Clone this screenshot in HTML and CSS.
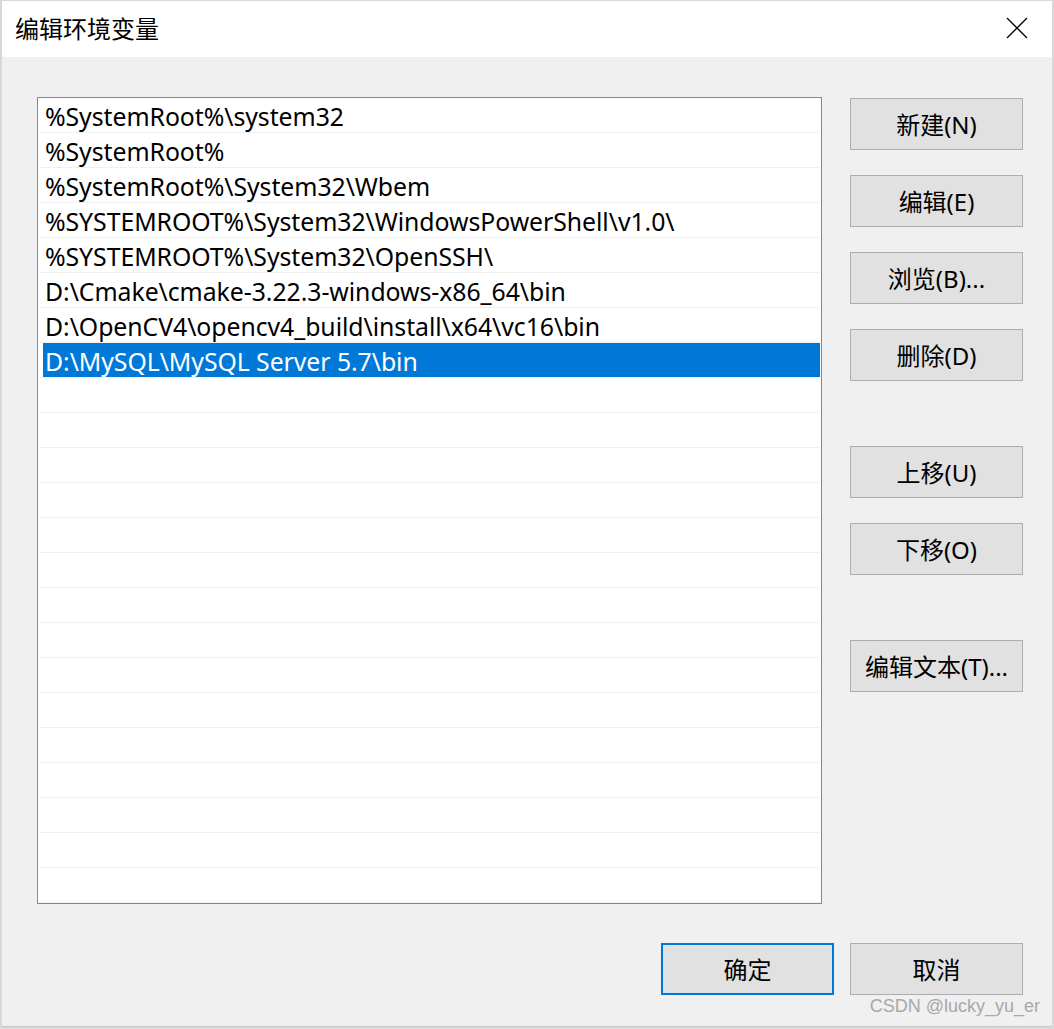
FILE: index.html
```html
<!DOCTYPE html>
<html lang="zh-CN">
<head>
<meta charset="utf-8">
<title>编辑环境变量</title>
<link rel="stylesheet" href="styles.css">
</head>
<body>
<div class="dialog">
  <div class="titlebar">
    <span class="title">编辑环境变量</span>
    <svg class="close" width="22" height="22" viewBox="0 0 22 22"><path d="M1 1 L21 21 M21 1 L1 21" stroke="#000" stroke-width="1.3" fill="none"/></svg>
  </div>
  <div class="body">
    <div class="main">
      <div class="listbox">
        <div class="row"><span class="label">%SystemRoot%\system32</span></div>
        <div class="row"><span class="label">%SystemRoot%</span></div>
        <div class="row"><span class="label">%SystemRoot%\System32\Wbem</span></div>
        <div class="row"><span class="label">%SYSTEMROOT%\System32\WindowsPowerShell\v1.0\</span></div>
        <div class="row"><span class="label">%SYSTEMROOT%\System32\OpenSSH\</span></div>
        <div class="row"><span class="label">D:\Cmake\cmake-3.22.3-windows-x86_64\bin</span></div>
        <div class="row"><span class="label">D:\OpenCV4\opencv4_build\install\x64\vc16\bin</span></div>
        <div class="row selected"><span class="label">D:\MySQL\MySQL Server 5.7\bin</span></div>
        <div class="row"></div><div class="row"></div><div class="row"></div><div class="row"></div>
        <div class="row"></div><div class="row"></div><div class="row"></div><div class="row"></div>
        <div class="row"></div><div class="row"></div><div class="row"></div><div class="row"></div>
        <div class="row"></div><div class="row"></div><div class="row"></div>
      </div>
      <div class="side">
        <div class="group">
          <button class="btn">新建(N)</button>
          <button class="btn">编辑(E)</button>
          <button class="btn">浏览(B)...</button>
          <button class="btn">删除(D)</button>
        </div>
        <div class="group">
          <button class="btn">上移(U)</button>
          <button class="btn">下移(O)</button>
        </div>
        <div class="group">
          <button class="btn">编辑文本(T)...</button>
        </div>
      </div>
    </div>
    <div class="footer">
      <button class="btn primary">确定</button>
      <button class="btn">取消</button>
    </div>
  </div>
  <div class="watermark">CSDN @lucky_yu_er</div>
</div>
</body>
</html>
```

FILE: styles.css
```css
html, body {
  margin: 0;
  padding: 0;
}
body {
  background: #d8d8d8;
  width: 1054px;
  height: 1029px;
  overflow: hidden;
  font-family: "Noto Sans", "Noto Sans CJK SC", sans-serif;
}
.dialog {
  position: relative;
  margin: 1px 0 0 2px;
  width: 1050px;
  height: 1026px;
  background: #f0f0f0;
  box-sizing: border-box;
  border-bottom: 1px solid #c8c8c8;
  display: flex;
  flex-direction: column;
}
.titlebar {
  height: 56px;
  background: #ffffff;
  display: flex;
  align-items: center;
  justify-content: space-between;
  padding: 0 24px 0 13px;
  flex: none;
}
.title {
  font-family: "Noto Sans CJK SC", sans-serif;
  font-size: 24px;
  color: #000;
  margin-top: -3px;
}
.close {
  margin-top: -2px;
}
.body {
  padding: 40px 0 0 35px;
  display: flex;
  flex-direction: column;
}
.main {
  display: flex;
  align-items: flex-start;
}
.listbox {
  width: 785px;
  height: 807px;
  box-sizing: border-box;
  border: 1px solid #828790;
  background: #fff;
  overflow: hidden;
  flex: none;
}
.row {
  height: 34px;
  border-bottom: 1px solid #f0f0f0;
  margin: 0 1px 0 2px;
  padding-left: 3px;
  display: flex;
}
.label {
  flex: 1;
  display: flex;
  align-items: center;
  padding-left: 2px;
  font-size: 24.8px;
  letter-spacing: -0.05px;
  color: #000;
  white-space: nowrap;
  margin-top: 2px;
}
.row.selected .label {
  background: #0078d7;
  color: #fff;
  margin-top: 0;
  padding-top: 2px;
}
.side {
  margin-left: 28px;
  display: flex;
  flex-direction: column;
  gap: 65px;
  margin-top: 1px;
}
.group {
  display: flex;
  flex-direction: column;
  gap: 25px;
}
.btn {
  width: 173px;
  height: 52px;
  box-sizing: border-box;
  background: #e1e1e1;
  border: 1px solid #adadad;
  border-radius: 0;
  font-family: "Noto Sans", "Noto Sans CJK SC", sans-serif;
  font-size: 24px;
  color: #000;
  padding: 0 0 2px 0;
  margin: 0;
}
.footer {
  margin-top: 39px;
  display: flex;
  gap: 16px;
  padding-left: 624px;
}
.btn.primary {
  border: 2px solid #0078d7;
}
.watermark {
  position: absolute;
  right: 12px;
  bottom: 9px;
  font-family: "Liberation Sans", sans-serif;
  font-size: 18px;
  color: #a8a8a8;
}
```
